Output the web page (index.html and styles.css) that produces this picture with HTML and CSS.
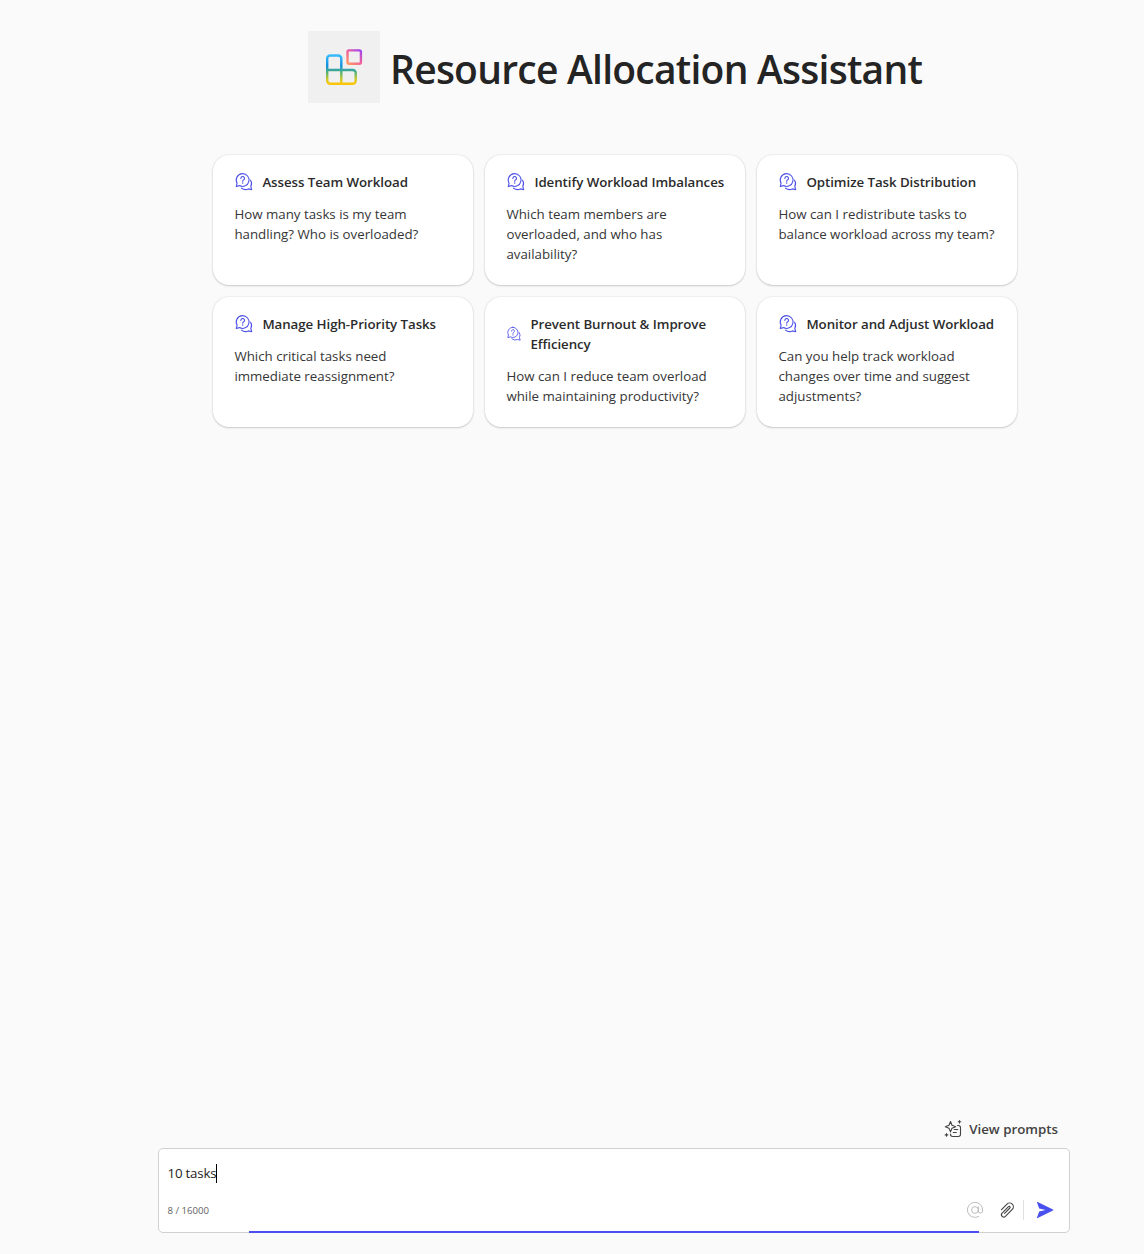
FILE: index.html
```html
<!DOCTYPE html>
<html lang="en">
<head>
<meta charset="utf-8">
<title>Resource Allocation Assistant</title>
<link rel="stylesheet" href="styles.css">
</head>
<body>
<svg class="defs" width="0" height="0" aria-hidden="true">
  <symbol id="chat-question" viewBox="0 0 20 20">
    <g fill="none" stroke="currentColor" stroke-width="1.1" stroke-linecap="round" stroke-linejoin="round">
      <path d="M8.500 1.600a6.400 6.400 0 1 1-3 12l-3.200.9.800-3.300A6.400 6.400 0 0 1 8.500 1.600z"/>
      <path d="M7.500 16.100a6.400 6.400 0 0 0 6.900.8l3.300.8-.9-3.200a6.200 6.200 0 0 0-.2-6.300"/>
      <path d="M6.900 6.400a1.800 1.800 0 1 1 2.800 1.400c-.7.400-1 .8-1 1.500"/>
    </g>
    <circle cx="8.700" cy="11.100" r=".75" fill="currentColor"/>
  </symbol>
</svg>
<main class="page">
  <header class="hero">
    <div class="logo">
      <svg width="40" height="40" viewBox="0 0 40 40" fill="none" stroke-width="2.400">
        <defs>
          <linearGradient id="blocks" x1="0" y1="7" x2="0" y2="38" gradientUnits="userSpaceOnUse">
            <stop offset="0" stop-color="#3bc0ff"/><stop offset=".38" stop-color="#0f8fdf"/><stop offset=".58" stop-color="#4bb07c"/><stop offset=".8" stop-color="#c3c92c"/><stop offset=".95" stop-color="#fcc50a"/>
          </linearGradient>
          <linearGradient id="tile" x1="36" y1="3" x2="24" y2="17" gradientUnits="userSpaceOnUse">
            <stop offset="0" stop-color="#a545f0"/><stop offset=".5" stop-color="#f0609a"/><stop offset="1" stop-color="#ff9a62"/>
          </linearGradient>
        </defs>
        <path stroke="url(#blocks)" d="M3.200 21.500V11.500a3 3 0 0 1 3-3H14.300a3 3 0 0 1 3 3V36.500M3.200 21.500V33.700a3 3 0 0 0 3 3H28.700a3 3 0 0 0 3-3V26a3 3 0 0 0-3-3H3.200"/>
        <rect stroke="url(#tile)" x="23.500" y="3.400" width="13.400" height="13.300" rx="1.500"/>
      </svg>
    </div>
    <h1 class="hero-title">Resource Allocation Assistant</h1>
  </header>

  <section class="cards">
    <article class="card">
      <h2 class="card-title"><svg class="card-icon"><use href="#chat-question"/></svg><span>Assess Team Workload</span></h2>
      <p class="card-text">How many tasks is my team<br>handling? Who is overloaded?</p>
    </article>
    <article class="card">
      <h2 class="card-title"><svg class="card-icon"><use href="#chat-question"/></svg><span>Identify Workload Imbalances</span></h2>
      <p class="card-text">Which team members are<br>overloaded, and who has<br>availability?</p>
    </article>
    <article class="card">
      <h2 class="card-title"><svg class="card-icon"><use href="#chat-question"/></svg><span>Optimize Task Distribution</span></h2>
      <p class="card-text">How can I redistribute tasks to<br>balance workload across my team?</p>
    </article>
    <article class="card">
      <h2 class="card-title"><svg class="card-icon"><use href="#chat-question"/></svg><span>Manage High-Priority Tasks</span></h2>
      <p class="card-text">Which critical tasks need<br>immediate reassignment?</p>
    </article>
    <article class="card">
      <h2 class="card-title compact"><svg class="card-icon"><use href="#chat-question"/></svg><span>Prevent Burnout &amp; Improve<br>Efficiency</span></h2>
      <p class="card-text">How can I reduce team overload<br>while maintaining productivity?</p>
    </article>
    <article class="card">
      <h2 class="card-title"><svg class="card-icon"><use href="#chat-question"/></svg><span>Monitor and Adjust Workload</span></h2>
      <p class="card-text">Can you help track workload<br>changes over time and suggest<br>adjustments?</p>
    </article>
  </section>

  <footer class="composer">
    <div class="prompts">
      <svg width="20" height="20" viewBox="0 0 20 20" fill="none" stroke="currentColor" stroke-width="1.100" stroke-linecap="round" stroke-linejoin="round">
        <path d="M7.500 2.500l1.500 3.700 3.700 1.500L9 9.200 7.500 12.900 6 9.200 2.300 7.700 6 6.200z"/>
        <path d="M16.500 1.500v2.600M15.200 2.800h2.600M3.500 14.600v2.600M2.200 15.900h2.600"/>
        <path d="M14.500 6.500h.8a2.200 2.200 0 0 1 2.200 2.200V15.300a2.200 2.200 0 0 1-2.200 2.200H9.700a2.200 2.200 0 0 1-2.200-2.200v-.3M11.300 10.500h3.500M10.300 13.500h3"/>
      </svg>
      <span class="prompts-label">View prompts</span>
    </div>
    <div class="box">
      <div class="entry"><span>10 tasks</span><i class="caret"></i></div>
      <div class="tools">
        <span class="count">8 / 16000</span>
        <svg class="at" width="20" height="20" viewBox="0 0 20 20" fill="none" stroke="currentColor" stroke-linecap="round">
          <circle cx="10" cy="10" r="3.400"/>
          <path d="M13.400 6.800V11a2.100 2.100 0 0 0 4.200 0V10a7.600 7.600 0 1 0-4 6.600"/>
        </svg>
        <svg class="clip" width="20" height="20" viewBox="0 0 20 20" fill="none" stroke="currentColor" stroke-width="1.100" stroke-linecap="round">
          <path d="M4.500 9.700l5.500-5.600a3.600 3.600 0 0 1 5.300 5.200l-6.900 7a2.200 2.200 0 0 1-3.300-3.200l6.400-6.400a.9.9 0 0 1 1.400 1.300l-5.300 5.400"/>
        </svg>
        <i class="rule"></i>
        <svg class="send" width="20" height="20" viewBox="0 0 20 20" fill="currentColor">
          <path d="M2 2.500c-.1-.4.300-.7.700-.5l15.300 7.600c.4.200.4.700 0 .9L2.700 18.100c-.4.200-.8-.1-.7-.5L4.200 11.600 10.500 10 4.200 8.500z"/>
        </svg>
      </div>
      <i class="focus-line"></i>
    </div>
  </footer>
</main>
</body>
</html>
```
FILE: styles.css
```css
* { box-sizing: border-box; }
body {
  margin: 0;
  background: #fafafa;
  color: #242424;
  font-family: "Open Sans", "Noto Sans", sans-serif;
}
h1, h2, p { margin: 0; }
.defs { display: block; }
.page {
  height: 1254px;
  padding: 31px 74px 21px 158px;
  display: flex;
  flex-direction: column;
}
.hero {
  display: flex;
  align-items: center;
  gap: 10px;
  padding-left: 150px;
  height: 72px;
}
.logo {
  width: 72px;
  height: 72px;
  background: #f0f0f0;
  display: flex;
  align-items: center;
  justify-content: center;
}
.hero-title {
  font-size: 39px;
  line-height: 52px;
  font-weight: 600;
  letter-spacing: -.75px;
  white-space: nowrap;
  padding-top: 3px;
}
.cards {
  margin: 52px 0 0 55px;
  display: grid;
  grid-template-columns: repeat(3, 260px);
  grid-auto-rows: 130px;
  gap: 12px;
}
.card {
  background: #fff;
  border-radius: 16px;
  padding: 17px 21px;
  box-shadow: 0 0 2px rgba(0, 0, 0, .14), 0 1px 2px rgba(0, 0, 0, .16);
}
.card-title {
  display: flex;
  align-items: center;
  gap: 8.4px;
  font-size: 13.3px;
  line-height: 20px;
  font-weight: 600;
  letter-spacing: -.06px;
  white-space: nowrap;
  color: #2b2b2b;
}
.card-icon {
  width: 20px;
  height: 20px;
  flex: none;
  color: #4f52e8;
}
.compact .card-icon { width: 16px; height: 16px; }
.card-text {
  margin-top: 12px;
  padding-left: .4px;
  font-size: 13.3px;
  line-height: 20px;
  white-space: nowrap;
  color: #363636;
}
.composer { margin-top: auto; }
.prompts {
  display: flex;
  justify-content: flex-end;
  align-items: center;
  gap: 6px;
  height: 20px;
  margin: 0 12px 9px 0;
  color: #424242;
}
.prompts-label { font-size: 13.3px; line-height: 20px; font-weight: 600; }
.box {
  position: relative;
  height: 85px;
  background: #fff;
  border: 1px solid #d1d1d1;
  border-radius: 5px;
  padding: 14px 14px 0 8.5px;
}
.entry { display: flex; align-items: center; height: 20px; font-size: 13.3px; letter-spacing: -.2px; }
.caret { width: 1px; height: 19px; background: #000; }
.tools { display: flex; align-items: center; height: 20px; margin-top: 17px; }
.count { font-size: 9.6px; color: #616161; margin-right: auto; }
.at { color: #bdbdbd; margin-right: 12px; }
.clip { color: #424242; margin-right: 6px; }
.rule { width: 1px; height: 20px; background: #e0e0e0; margin-right: 11px; }
.send { color: #4a50ee; }
.focus-line {
  position: absolute;
  left: 90px;
  right: 90px;
  bottom: -1px;
  height: 2px;
  background: #4a50ee;
}
```
